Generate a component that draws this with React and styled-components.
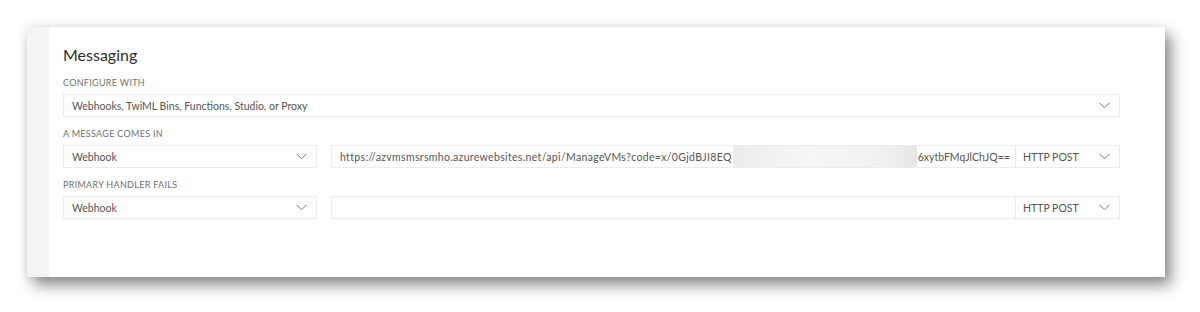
import styled, { createGlobalStyle } from "styled-components";

const GlobalStyle = createGlobalStyle`
  body {
    margin: 0;
    background: #ffffff;
    font-family: Lato, "Open Sans", sans-serif;
  }
`;

function Chevron() {
  return (
    <svg width="11" height="7" viewBox="0 0 11 7" fill="none">
      <path d="M0.5 0.8 L5.5 5.8 L10.5 0.8" stroke="#777777" strokeWidth="1" />
    </svg>
  );
}

function Select({ children, width }) {
  return (
    <SelectBox $width={width}>
      <span>{children}</span>
      <Chevron />
    </SelectBox>
  );
}

function App() {
  return (
    <Page>
      <GlobalStyle />
      <Card>
        <Strip />
        <Content>
          <Title>Messaging</Title>
          <Label>Configure with</Label>
          <Select>Webhooks, TwiML Bins, Functions, Studio, or Proxy</Select>

          <Label>A message comes in</Label>
          <Row>
            <Select width="254px">Webhook</Select>
            <UrlGroup>
              <UrlInput>
                <Spaced>https://azvmsmsrsmho.azurewebsites.net/api/ManageVMs?code=x/0GjdBJI8EQ</Spaced>
                <Redacted />
                6xytbFMqJlChJQ==
              </UrlInput>
              <MethodSelect>
                <span>HTTP POST</span>
                <Chevron />
              </MethodSelect>
            </UrlGroup>
          </Row>

          <Label>Primary handler fails</Label>
          <Row>
            <Select width="254px">Webhook</Select>
            <UrlGroup>
              <UrlInput />
              <MethodSelect>
                <span>HTTP POST</span>
                <Chevron />
              </MethodSelect>
            </UrlGroup>
          </Row>
        </Content>
      </Card>
    </Page>
  );
}

const Page = styled.div`
  padding: 27px 0 0 27px;
  height: 312px;
  box-sizing: border-box;
`;

const Card = styled.div`
  width: 1138px;
  height: 250px;
  display: flex;
  background: #ffffff;
  box-shadow: 0 0 10px rgba(0, 0, 0, 0.08), 6px 8px 14px rgba(0, 0, 0, 0.45);
`;

const Strip = styled.div`
  width: 22px;
  background: #f4f4f4;
`;

const Content = styled.div`
  flex: 1;
  padding: 18px 45px 0 14px;
`;

const Title = styled.div`
  font-size: 16px;
  color: #2f2f2f;
  line-height: 20px;
  margin-bottom: 12px;
`;

const Label = styled.div`
  font-size: 9px;
  letter-spacing: 0.3px;
  text-transform: uppercase;
  color: #6f6f6f;
  line-height: 11px;
  margin-bottom: 6px;
`;

const SelectBox = styled.div`
  width: ${(p) => p.$width || "auto"};
  height: 23px;
  box-sizing: border-box;
  border: 1px solid #ececec;
  padding: 0 9px 0 8px;
  display: flex;
  align-items: center;
  justify-content: space-between;
  font-size: 10.5px;
  color: #555555;
  margin-bottom: 11px;
`;

const Row = styled.div`
  display: flex;
  gap: 14px;
`;

const UrlGroup = styled.div`
  flex: 1;
  display: flex;
  height: 23px;
  border: 1px solid #ececec;
  box-sizing: border-box;
`;

const UrlInput = styled.div`
  flex: 1;
  display: flex;
  align-items: center;
  padding-left: 8px;
  font-size: 10.5px;
  color: #555555;
  white-space: nowrap;
  overflow: hidden;
`;

const Spaced = styled.span`
  letter-spacing: 0.33px;
`;

const Redacted = styled.span`
  width: 184px;
  height: 21px;
  margin: 0 1px 0 1px;
  background: linear-gradient(90deg, #ececec, #f6f6f6 40%, #f1f1f1 80%, #e6e6e6);
`;

const MethodSelect = styled.div`
  width: 104px;
  border-left: 1px solid #ececec;
  display: flex;
  align-items: center;
  justify-content: space-between;
  padding: 0 9px 0 7px;
  box-sizing: border-box;
  font-size: 10.5px;
  color: #555555;
`;

export default App;
